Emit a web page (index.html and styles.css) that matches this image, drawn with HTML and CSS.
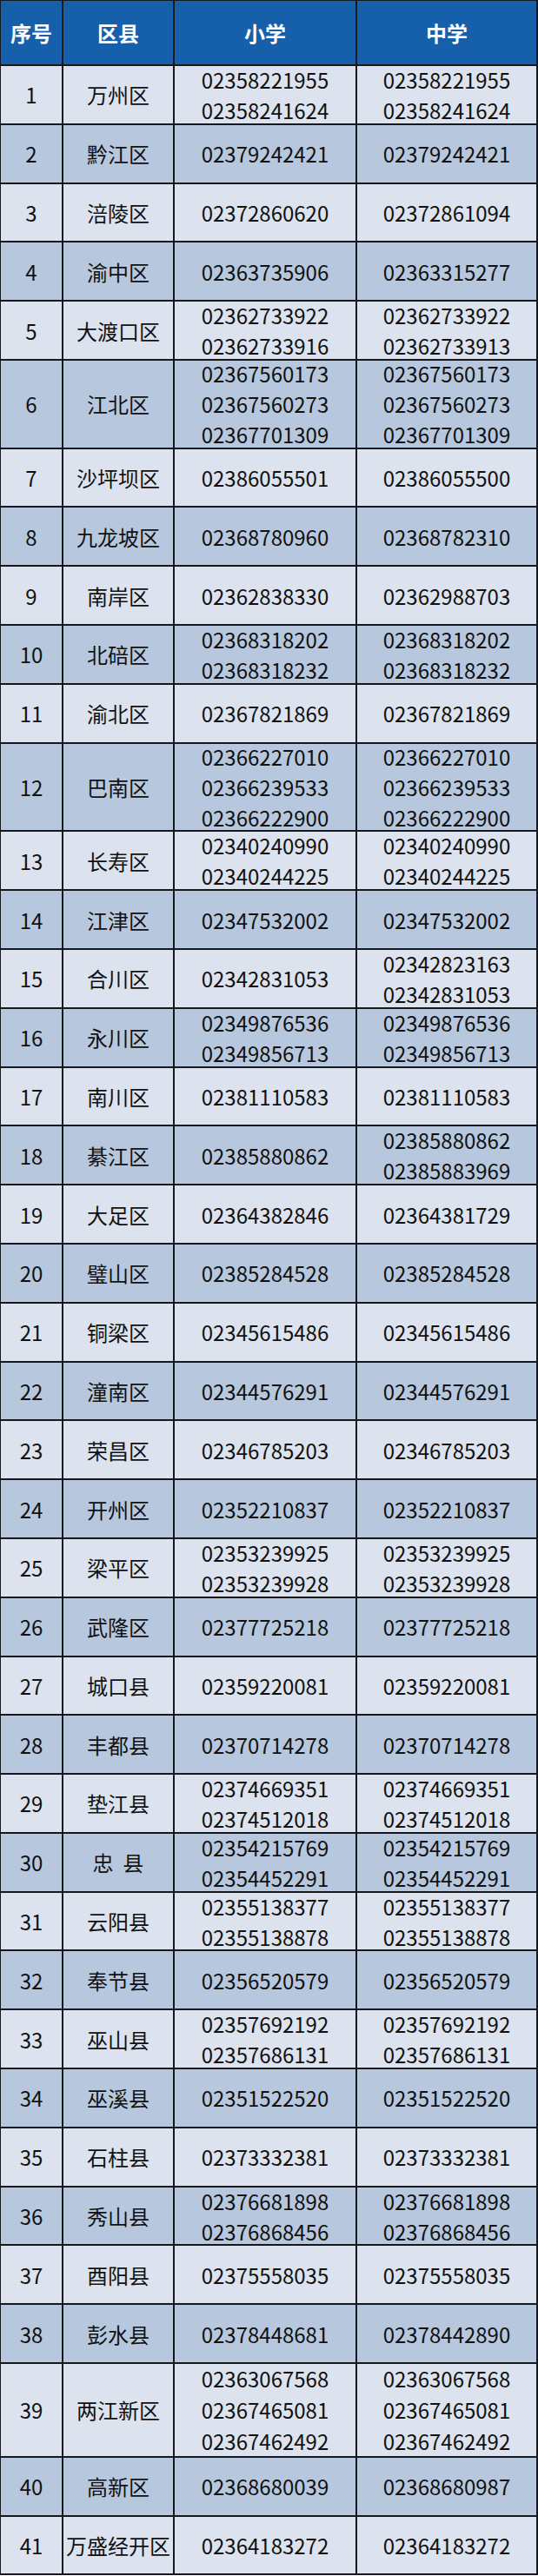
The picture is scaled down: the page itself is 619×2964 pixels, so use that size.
FILE: index.html
```html
<!DOCTYPE html>
<html lang="zh-CN">
<head>
<meta charset="utf-8">
<title>重庆市各区县咨询电话</title>
<link rel="stylesheet" href="styles.css">
</head>
<body>
<div class="table">
  <div class="row head">
    <div class="cell">序号</div><div class="cell">区县</div><div class="cell">小学</div><div class="cell">中学</div>
  </div>
  <div class="row odd"><div class="cell">1</div><div class="cell">万州区</div><div class="cell"><span>02358221955</span><span>02358241624</span></div><div class="cell"><span>02358221955</span><span>02358241624</span></div></div>
  <div class="row even"><div class="cell">2</div><div class="cell">黔江区</div><div class="cell">02379242421</div><div class="cell">02379242421</div></div>
  <div class="row odd"><div class="cell">3</div><div class="cell">涪陵区</div><div class="cell">02372860620</div><div class="cell">02372861094</div></div>
  <div class="row even"><div class="cell">4</div><div class="cell">渝中区</div><div class="cell">02363735906</div><div class="cell">02363315277</div></div>
  <div class="row odd"><div class="cell">5</div><div class="cell">大渡口区</div><div class="cell"><span>02362733922</span><span>02362733916</span></div><div class="cell"><span>02362733922</span><span>02362733913</span></div></div>
  <div class="row even x3"><div class="cell">6</div><div class="cell">江北区</div><div class="cell"><span>02367560173</span><span>02367560273</span><span>02367701309</span></div><div class="cell"><span>02367560173</span><span>02367560273</span><span>02367701309</span></div></div>
  <div class="row odd"><div class="cell">7</div><div class="cell">沙坪坝区</div><div class="cell">02386055501</div><div class="cell">02386055500</div></div>
  <div class="row even"><div class="cell">8</div><div class="cell">九龙坡区</div><div class="cell">02368780960</div><div class="cell">02368782310</div></div>
  <div class="row odd"><div class="cell">9</div><div class="cell">南岸区</div><div class="cell">02362838330</div><div class="cell">02362988703</div></div>
  <div class="row even"><div class="cell">10</div><div class="cell">北碚区</div><div class="cell"><span>02368318202</span><span>02368318232</span></div><div class="cell"><span>02368318202</span><span>02368318232</span></div></div>
  <div class="row odd"><div class="cell">11</div><div class="cell">渝北区</div><div class="cell">02367821869</div><div class="cell">02367821869</div></div>
  <div class="row even x3"><div class="cell">12</div><div class="cell">巴南区</div><div class="cell"><span>02366227010</span><span>02366239533</span><span>02366222900</span></div><div class="cell"><span>02366227010</span><span>02366239533</span><span>02366222900</span></div></div>
  <div class="row odd"><div class="cell">13</div><div class="cell">长寿区</div><div class="cell"><span>02340240990</span><span>02340244225</span></div><div class="cell"><span>02340240990</span><span>02340244225</span></div></div>
  <div class="row even"><div class="cell">14</div><div class="cell">江津区</div><div class="cell">02347532002</div><div class="cell">02347532002</div></div>
  <div class="row odd"><div class="cell">15</div><div class="cell">合川区</div><div class="cell">02342831053</div><div class="cell"><span>02342823163</span><span>02342831053</span></div></div>
  <div class="row even"><div class="cell">16</div><div class="cell">永川区</div><div class="cell"><span>02349876536</span><span>02349856713</span></div><div class="cell"><span>02349876536</span><span>02349856713</span></div></div>
  <div class="row odd"><div class="cell">17</div><div class="cell">南川区</div><div class="cell">02381110583</div><div class="cell">02381110583</div></div>
  <div class="row even"><div class="cell">18</div><div class="cell">綦江区</div><div class="cell">02385880862</div><div class="cell"><span>02385880862</span><span>02385883969</span></div></div>
  <div class="row odd"><div class="cell">19</div><div class="cell">大足区</div><div class="cell">02364382846</div><div class="cell">02364381729</div></div>
  <div class="row even"><div class="cell">20</div><div class="cell">璧山区</div><div class="cell">02385284528</div><div class="cell">02385284528</div></div>
  <div class="row odd"><div class="cell">21</div><div class="cell">铜梁区</div><div class="cell">02345615486</div><div class="cell">02345615486</div></div>
  <div class="row even"><div class="cell">22</div><div class="cell">潼南区</div><div class="cell">02344576291</div><div class="cell">02344576291</div></div>
  <div class="row odd"><div class="cell">23</div><div class="cell">荣昌区</div><div class="cell">02346785203</div><div class="cell">02346785203</div></div>
  <div class="row even"><div class="cell">24</div><div class="cell">开州区</div><div class="cell">02352210837</div><div class="cell">02352210837</div></div>
  <div class="row odd"><div class="cell">25</div><div class="cell">梁平区</div><div class="cell"><span>02353239925</span><span>02353239928</span></div><div class="cell"><span>02353239925</span><span>02353239928</span></div></div>
  <div class="row even"><div class="cell">26</div><div class="cell">武隆区</div><div class="cell">02377725218</div><div class="cell">02377725218</div></div>
  <div class="row odd"><div class="cell">27</div><div class="cell">城口县</div><div class="cell">02359220081</div><div class="cell">02359220081</div></div>
  <div class="row even"><div class="cell">28</div><div class="cell">丰都县</div><div class="cell">02370714278</div><div class="cell">02370714278</div></div>
  <div class="row odd"><div class="cell">29</div><div class="cell">垫江县</div><div class="cell"><span>02374669351</span><span>02374512018</span></div><div class="cell"><span>02374669351</span><span>02374512018</span></div></div>
  <div class="row even"><div class="cell">30</div><div class="cell">忠&nbsp;&nbsp;县</div><div class="cell"><span>02354215769</span><span>02354452291</span></div><div class="cell"><span>02354215769</span><span>02354452291</span></div></div>
  <div class="row odd"><div class="cell">31</div><div class="cell">云阳县</div><div class="cell"><span>02355138377</span><span>02355138878</span></div><div class="cell"><span>02355138377</span><span>02355138878</span></div></div>
  <div class="row even"><div class="cell">32</div><div class="cell">奉节县</div><div class="cell">02356520579</div><div class="cell">02356520579</div></div>
  <div class="row odd"><div class="cell">33</div><div class="cell">巫山县</div><div class="cell"><span>02357692192</span><span>02357686131</span></div><div class="cell"><span>02357692192</span><span>02357686131</span></div></div>
  <div class="row even"><div class="cell">34</div><div class="cell">巫溪县</div><div class="cell">02351522520</div><div class="cell">02351522520</div></div>
  <div class="row odd"><div class="cell">35</div><div class="cell">石柱县</div><div class="cell">02373332381</div><div class="cell">02373332381</div></div>
  <div class="row even"><div class="cell">36</div><div class="cell">秀山县</div><div class="cell"><span>02376681898</span><span>02376868456</span></div><div class="cell"><span>02376681898</span><span>02376868456</span></div></div>
  <div class="row odd"><div class="cell">37</div><div class="cell">酉阳县</div><div class="cell">02375558035</div><div class="cell">02375558035</div></div>
  <div class="row even"><div class="cell">38</div><div class="cell">彭水县</div><div class="cell">02378448681</div><div class="cell">02378442890</div></div>
  <div class="row odd x3b"><div class="cell">39</div><div class="cell">两江新区</div><div class="cell"><span>02363067568</span><span>02367465081</span><span>02367462492</span></div><div class="cell"><span>02363067568</span><span>02367465081</span><span>02367462492</span></div></div>
  <div class="row even"><div class="cell">40</div><div class="cell">高新区</div><div class="cell">02368680039</div><div class="cell">02368680987</div></div>
  <div class="row odd"><div class="cell">41</div><div class="cell">万盛经开区</div><div class="cell">02364183272</div><div class="cell">02364183272</div></div>
</div>
</body>
</html>
```
FILE: styles.css
```css
html, body {
  margin: 0;
  padding: 0;
  background: #ffffff;
}

body {
  font-family: "Noto Sans CJK SC", "Noto Sans", sans-serif;
  font-size: 24px;
  color: #111111;
}

.table {
  width: 619px;
  box-sizing: border-box;
  border-top: 1px solid #15191e;
  border-left: 1px solid #15191e;
  display: flex;
  flex-direction: column;
}

.row {
  display: grid;
  grid-template-columns: 72px 128px 210px 208px;
  box-sizing: border-box;
  height: 67.8px;
  border-bottom: 2px solid #15191e;
}

.row.head {
  height: 75px;
  background: #1660ab;
  color: #ffffff;
  font-weight: 700;
}

.row.x3 {
  height: 101.7px;
}

.row.x3b {
  height: 107.7px;
}

.odd {
  background: #dce3ee;
}

.even {
  background: #b7c8de;
}

.cell {
  box-sizing: border-box;
  border-right: 2px solid #15191e;
  display: flex;
  flex-direction: column;
  justify-content: center;
  align-items: center;
  text-align: center;
  white-space: nowrap;
  min-height: 0;
}

.cell span {
  display: block;
}

.x3b .cell span {
  line-height: 36px;
}
```
